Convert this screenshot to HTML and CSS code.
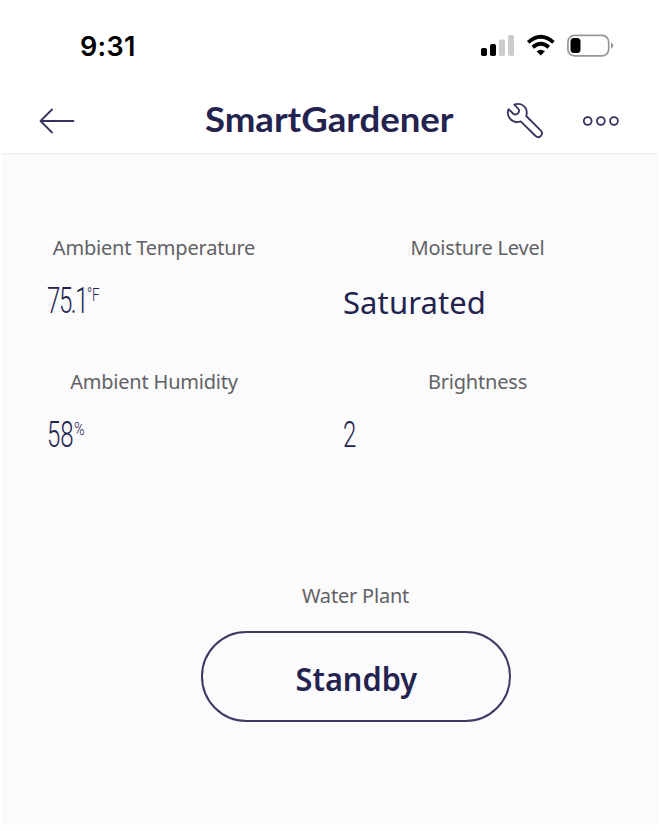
FILE: index.html
```html
<!DOCTYPE html>
<html lang="en">
<head>
<meta charset="utf-8">
<title>SmartGardener</title>
<link rel="stylesheet" href="styles.css">
</head>
<body>
<div class="status">
  <span class="time">9:31</span>
  <svg class="indicators" width="134" height="24" viewBox="0 0 134 24">
    <rect x="1" y="14" width="6" height="8" rx="1.8" fill="#000"/>
    <rect x="10" y="10" width="6" height="12" rx="1.8" fill="#000"/>
    <rect x="19" y="5.500" width="6" height="16.500" rx="1.800" fill="#ccc"/>
    <rect x="28" y="1" width="6" height="21" rx="1.800" fill="#ccc"/>
    <g fill="none" stroke="#000" stroke-width="3.800">
      <path d="M48.200 8.400Q60.800-2.800 73.400 8.400"/>
      <path d="M52.800 13.200Q60.800 6.200 68.800 13.200"/>
    </g>
    <path d="M56.600 17.300Q60.800 14 65 17.300L60.800 21.400Z" fill="#000"/>
    <rect x="87.900" y="1.400" width="40.800" height="20.400" rx="6.500" fill="none" stroke="#969696" stroke-width="1.700"/>
    <rect x="90.500" y="4" width="10" height="15" rx="3.500" fill="#000"/>
    <path d="M131 8.500Q133.300 9.500 133.300 11.500Q133.300 13.500 131 14.500Z" fill="#969696"/>
  </svg>
</div>
<header class="bar">
  <svg class="back" width="36" height="26" viewBox="0 0 36 26"><path d="M34.500 13H1.500M13 1.500L1.500 13L13 24.500"/></svg>
  <h1 class="title"><span class="title-text">SmartGardener</span></h1>
  <svg class="wrench" width="38" height="38" viewBox="0 0 38 38"><path d="M8.300 2.600C12.500.7 17.500 2.300 19.700 6.300C21 8.700 21.100 11.300 20.200 14L34.900 28.600C38 32.300 33.600 37.300 29.600 34L14.700 19.300C10.500 21.200 5.600 19.400 3.300 15.700C1.500 12.900 1.400 9.800 2.600 7.200L7.500 12C10.800 13.700 14.300 10.200 12.500 7Z"/></svg>
  <svg class="more" width="38" height="12" viewBox="0 0 38 12"><circle cx="5.700" cy="6" r="3.900"/><circle cx="18.900" cy="6" r="3.900"/><circle cx="32" cy="6" r="3.900"/></svg>
</header>
<main class="panel">
  <div class="readings">
    <section class="reading"><h2 class="label">Ambient Temperature</h2><div class="value"><span class="number temperature">75.1</span><span class="unit">°F</span></div></section>
    <section class="reading"><h2 class="label">Moisture Level</h2><div class="value state">Saturated</div></section>
    <section class="reading"><h2 class="label">Ambient Humidity</h2><div class="value"><span class="number humidity">58</span><span class="unit percent">%</span></div></section>
    <section class="reading"><h2 class="label">Brightness</h2><div class="value"><span class="number">2</span></div></section>
  </div>
  <section class="water">
    <h2 class="label">Water Plant</h2>
    <button class="standby" type="button"><span class="standby-text">Standby</span></button>
  </section>
</main>
</body>
</html>
```
FILE: styles.css
```css
* { box-sizing: border-box; }
body { margin: 0; height: 831px; background: #fff; font-family: "Noto Sans", sans-serif; color: #24234f; overflow: hidden; }
h1, h2 { margin: 0; }
svg { display: block; flex: none; }
.status { height: 87px; padding: 34px 49px 0 80px; display: flex; justify-content: space-between; align-items: flex-start; }
.time { font: 600 27px/26px Inter, sans-serif; color: #000; letter-spacing: .3px; }
.bar { height: 66px; display: flex; align-items: center; padding: 1px 0 0 39px; }
.back, .wrench, .more { fill: none; stroke: #34325e; stroke-width: 1.8; stroke-linecap: round; stroke-linejoin: round; }
.title { width: 249px; margin: -3px 0 0 130px; font: 700 34px/40px Lato, sans-serif; white-space: nowrap; }
.title-text { display: inline-block; transform: scaleX(1.076); transform-origin: left; }
.wrench { margin-left: 52px; }
.more { margin-left: 38px; }
.panel { margin: 0 5px 0 2px; height: 672px; background: #fbfbfc; border-top: 2px solid #f1f1f2; padding: 79px 0 0 45px; }
.readings { display: grid; grid-template-columns: 214px 269px; column-gap: 82px; grid-auto-rows: 134px; }
.label { font-size: 20px; line-height: 28px; font-weight: 400; color: #626266; text-align: center; white-space: nowrap; letter-spacing: -.2px; }
.value { height: 40px; margin-top: 20px; display: flex; align-items: flex-start; white-space: nowrap; }
.number { font: 300 37px/38px Roboto, sans-serif; transform: scaleX(.65); transform-origin: left; }
.temperature { width: 40px; letter-spacing: -2.2px; }
.humidity { width: 27px; }
.unit { font: 300 18px/20px Roboto, sans-serif; transform: scaleX(.75); transform-origin: left; margin-top: 3px; }
.percent { transform: scaleX(.8); }
.state { font-size: 31px; line-height: 40px; letter-spacing: .1px; }
.water { width: 309px; margin: 80px 0 0 154px; }
.standby { display: block; width: 310px; height: 91px; margin-top: 21px; padding: 4px 0 0; border: 2px solid #3d3b66; border-radius: 46px; background: #fbfbfd; color: #24234f; font: 600 33px/40px "Noto Sans", sans-serif; }
.standby-text { display: inline-block; transform: scaleX(.93); }
```
